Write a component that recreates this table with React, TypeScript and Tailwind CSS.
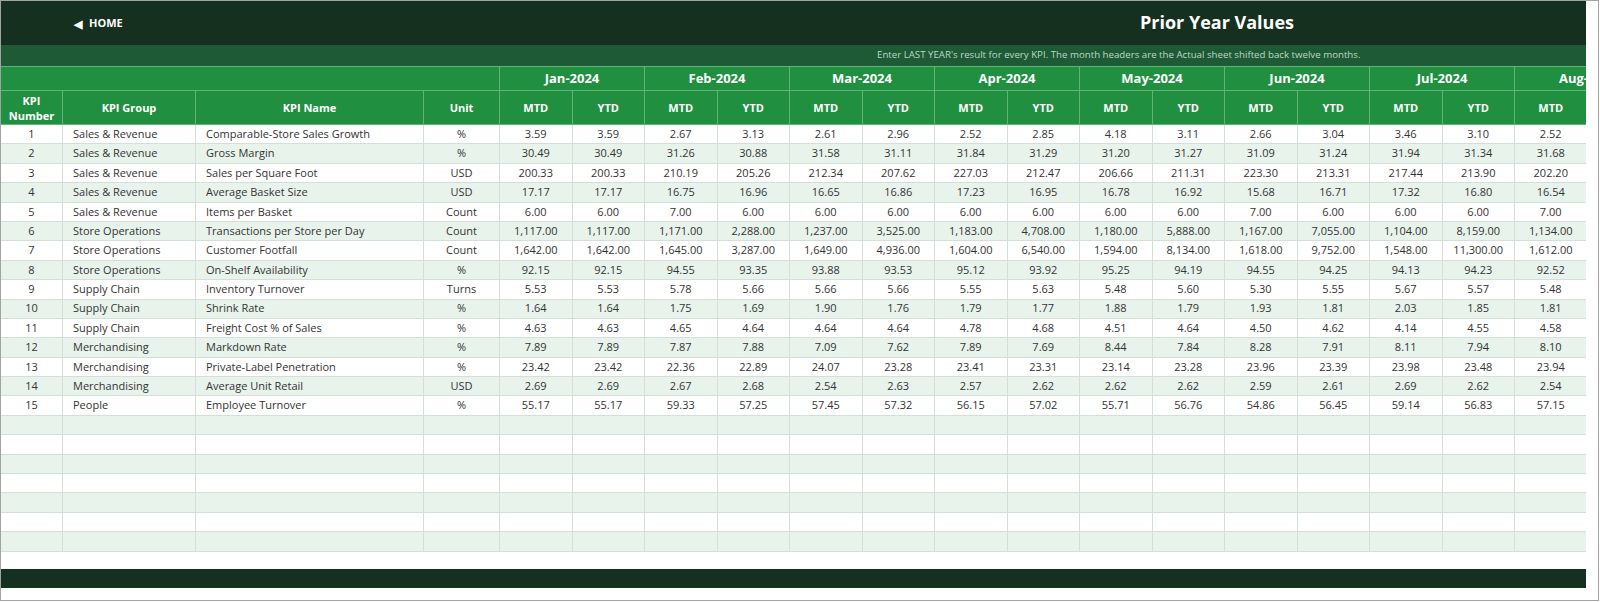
import React from "react";

const months = ["Jan-2024", "Feb-2024", "Mar-2024", "Apr-2024", "May-2024", "Jun-2024", "Jul-2024", "Aug-2024"];

const rows: [number, string, string, string, string[]][] = [
  [1, "Sales & Revenue", "Comparable-Store Sales Growth", "%", ["3.59", "3.59", "2.67", "3.13", "2.61", "2.96", "2.52", "2.85", "4.18", "3.11", "2.66", "3.04", "3.46", "3.10", "2.52"]],
  [2, "Sales & Revenue", "Gross Margin", "%", ["30.49", "30.49", "31.26", "30.88", "31.58", "31.11", "31.84", "31.29", "31.20", "31.27", "31.09", "31.24", "31.94", "31.34", "31.68"]],
  [3, "Sales & Revenue", "Sales per Square Foot", "USD", ["200.33", "200.33", "210.19", "205.26", "212.34", "207.62", "227.03", "212.47", "206.66", "211.31", "223.30", "213.31", "217.44", "213.90", "202.20"]],
  [4, "Sales & Revenue", "Average Basket Size", "USD", ["17.17", "17.17", "16.75", "16.96", "16.65", "16.86", "17.23", "16.95", "16.78", "16.92", "15.68", "16.71", "17.32", "16.80", "16.54"]],
  [5, "Sales & Revenue", "Items per Basket", "Count", ["6.00", "6.00", "7.00", "6.00", "6.00", "6.00", "6.00", "6.00", "6.00", "6.00", "7.00", "6.00", "6.00", "6.00", "7.00"]],
  [6, "Store Operations", "Transactions per Store per Day", "Count", ["1,117.00", "1,117.00", "1,171.00", "2,288.00", "1,237.00", "3,525.00", "1,183.00", "4,708.00", "1,180.00", "5,888.00", "1,167.00", "7,055.00", "1,104.00", "8,159.00", "1,134.00"]],
  [7, "Store Operations", "Customer Footfall", "Count", ["1,642.00", "1,642.00", "1,645.00", "3,287.00", "1,649.00", "4,936.00", "1,604.00", "6,540.00", "1,594.00", "8,134.00", "1,618.00", "9,752.00", "1,548.00", "11,300.00", "1,612.00"]],
  [8, "Store Operations", "On-Shelf Availability", "%", ["92.15", "92.15", "94.55", "93.35", "93.88", "93.53", "95.12", "93.92", "95.25", "94.19", "94.55", "94.25", "94.13", "94.23", "92.52"]],
  [9, "Supply Chain", "Inventory Turnover", "Turns", ["5.53", "5.53", "5.78", "5.66", "5.66", "5.66", "5.55", "5.63", "5.48", "5.60", "5.30", "5.55", "5.67", "5.57", "5.48"]],
  [10, "Supply Chain", "Shrink Rate", "%", ["1.64", "1.64", "1.75", "1.69", "1.90", "1.76", "1.79", "1.77", "1.88", "1.79", "1.93", "1.81", "2.03", "1.85", "1.81"]],
  [11, "Supply Chain", "Freight Cost % of Sales", "%", ["4.63", "4.63", "4.65", "4.64", "4.64", "4.64", "4.78", "4.68", "4.51", "4.64", "4.50", "4.62", "4.14", "4.55", "4.58"]],
  [12, "Merchandising", "Markdown Rate", "%", ["7.89", "7.89", "7.87", "7.88", "7.09", "7.62", "7.89", "7.69", "8.44", "7.84", "8.28", "7.91", "8.11", "7.94", "8.10"]],
  [13, "Merchandising", "Private-Label Penetration", "%", ["23.42", "23.42", "22.36", "22.89", "24.07", "23.28", "23.41", "23.31", "23.14", "23.28", "23.96", "23.39", "23.98", "23.48", "23.94"]],
  [14, "Merchandising", "Average Unit Retail", "USD", ["2.69", "2.69", "2.67", "2.68", "2.54", "2.63", "2.57", "2.62", "2.62", "2.62", "2.59", "2.61", "2.69", "2.62", "2.54"]],
  [15, "People", "Employee Turnover", "%", ["55.17", "55.17", "59.33", "57.25", "57.45", "57.32", "56.15", "57.02", "55.71", "56.76", "54.86", "56.45", "59.14", "56.83", "57.15"]],
];

const GRID = "grid grid-cols-[62px_133px_228px_76px_repeat(16,72.5px)]";

function DataRow({ idx, row }: { idx: number; row?: [number, string, string, string, string[]] }) {
  const bg = idx % 2 === 1 ? "bg-[#e8f3ec]" : "bg-white";
  const cell = "border-r border-b border-[#d3dfd8] flex items-center overflow-hidden whitespace-nowrap";
  const vals = row ? row[4] : [];
  return (
    <div className={`${GRID} h-[19.4px] ${bg} text-[11px] text-[#333333]`}>
      <div className={`${cell} justify-center`}>{row ? row[0] : ""}</div>
      <div className={`${cell} pl-[10px]`}>{row ? row[1] : ""}</div>
      <div className={`${cell} pl-[10px]`}>{row ? row[2] : ""}</div>
      <div className={`${cell} justify-center`}>{row ? row[3] : ""}</div>
      {Array.from({ length: 16 }).map((_, i) => (
        <div key={i} className={`${cell} justify-center`}>
          {vals[i] ?? ""}
        </div>
      ))}
    </div>
  );
}

export default function App() {
  return (
    <div className="w-[1600px] h-[602px] bg-white font-['Open_Sans',sans-serif]">
      <div className="w-[1599px] h-[601px] border border-[#a3a3a3] bg-white">
        <div className="w-[1585px] overflow-hidden">
          {/* Top header */}
          <div className="h-[44px] bg-[#163020] flex items-center">
            <div className="w-[847px] pl-[73px] flex items-center gap-[7px] text-white text-[11px] font-bold">
              <span className="text-[11px] leading-none">◀</span>
              <span>HOME</span>
            </div>
            <div className="flex-1 text-center text-white text-[18px] font-bold pb-[1px]">Prior Year Values</div>
          </div>
          {/* Sub header */}
          <div className="h-[21px] bg-[#1e5a36] flex items-center">
            <div className="pl-[876px] text-[9.7px] text-[#bcd8c5] whitespace-nowrap">
              Enter LAST YEAR's result for every KPI. The month headers are the Actual sheet shifted back twelve months.
            </div>
          </div>
          {/* Month row */}
          <div className={`${GRID} h-[25px] bg-[#208f40] border-t border-[#5fb476] text-white font-bold text-[13px]`}>
            <div className="col-span-4 border-r border-b border-[#5fb476]"></div>
            {months.map((m, i) => (
              <div
                key={m}
                className={`col-span-2 border-r border-b border-[#5fb476] flex items-center whitespace-nowrap overflow-visible ${
                  i === 7 ? "pl-[44px]" : "justify-center"
                }`}
              >
                {m}
              </div>
            ))}
          </div>
          {/* Column header row */}
          <div className={`${GRID} h-[34px] bg-[#208f40] text-white font-bold text-[11px] leading-[15px]`}>
            <div className="border-r border-b border-[#5fb476] flex items-center justify-center text-center">
              KPI
              <br />
              Number
            </div>
            <div className="border-r border-b border-[#5fb476] flex items-center justify-center">KPI Group</div>
            <div className="border-r border-b border-[#5fb476] flex items-center justify-center">KPI Name</div>
            <div className="border-r border-b border-[#5fb476] flex items-center justify-center">Unit</div>
            {Array.from({ length: 16 }).map((_, i) => (
              <div key={i} className="border-r border-b border-[#5fb476] flex items-center justify-center">
                {i % 2 === 0 ? "MTD" : "YTD"}
              </div>
            ))}
          </div>
          {/* Data rows */}
          {Array.from({ length: 22 }).map((_, i) => (
            <DataRow key={i} idx={i} row={rows[i]} />
          ))}
          <div className="h-[17px]"></div>
          <div className="h-[19px] bg-[#163020]"></div>
        </div>
      </div>
    </div>
  );
}
